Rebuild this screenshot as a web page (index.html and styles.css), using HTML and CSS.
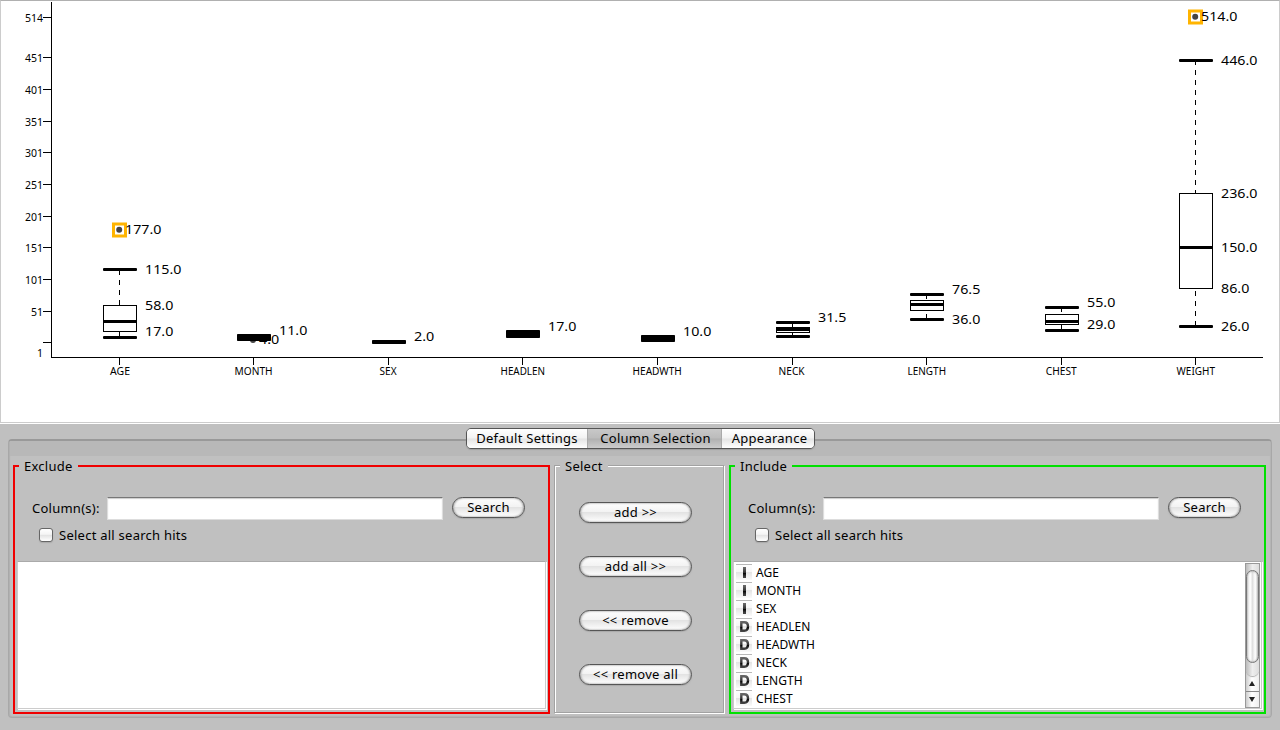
FILE: index.html
```html
<!DOCTYPE html>
<html lang="en">
<head>
<meta charset="utf-8">
<title>Box Plot</title>
<link rel="stylesheet" href="styles.css">
</head>
<body>
<main class="window">
  <section class="chart">
    <svg class="plot" viewBox="0 0 1280 424" width="1280" height="424">
      <defs>
        <g id="cap"><rect x="-16" y="-1.5" width="34" height="3" rx="1"/></g>
        <g id="outlier"><rect class="mark" x="-5.5" y="-5" width="12" height="12"/><circle class="dot" cx=".2" cy=".8" r="3"/></g>
      </defs>
      <path class="line" d="M51.5 2V358M52 357.5H1263M43 17.5h8M43 57.5h8M43 89.5h8M43 121.5h8M43 152.5h8M43 184.5h8M43 216.5h8M43 247.5h8M43 279.5h8M43 311.5h8M43 342.5h8M119.5 358v7M253.5 358v7M388.5 358v7M522.5 358v7M657.5 358v7M792.5 358v7M926.5 358v7M1061.5 358v7M1195.5 358v7"/>
      <g class="scale">
        <text x="25" y="21.5" textLength="18">514</text>
        <text x="25" y="61.8" textLength="18">451</text>
        <text x="25" y="93.8" textLength="18">401</text>
        <text x="25" y="125.8" textLength="18">351</text>
        <text x="25" y="156.8" textLength="18">301</text>
        <text x="25" y="188.8" textLength="18">251</text>
        <text x="25" y="220.8" textLength="18">201</text>
        <text x="25" y="251.8" textLength="18">151</text>
        <text x="25" y="283.8" textLength="18">101</text>
        <text x="31" y="315.8" textLength="12">51</text>
        <text x="37" y="357">1</text>
      </g>
      <g class="names">
        <text x="110" y="375" textLength="20" lengthAdjust="spacingAndGlyphs">AGE</text>
        <text x="234.6" y="375" textLength="38" lengthAdjust="spacingAndGlyphs">MONTH</text>
        <text x="379.6" y="375" textLength="17" lengthAdjust="spacingAndGlyphs">SEX</text>
        <text x="500.6" y="375" textLength="44.4" lengthAdjust="spacingAndGlyphs">HEADLEN</text>
        <text x="632.6" y="375" textLength="49.2" lengthAdjust="spacingAndGlyphs">HEADWTH</text>
        <text x="778.6" y="375" textLength="26" lengthAdjust="spacingAndGlyphs">NECK</text>
        <text x="907.6" y="375" textLength="38.4" lengthAdjust="spacingAndGlyphs">LENGTH</text>
        <text x="1045.8" y="375" textLength="31" lengthAdjust="spacingAndGlyphs">CHEST</text>
        <text x="1176.6" y="375" textLength="38.4" lengthAdjust="spacingAndGlyphs">WEIGHT</text>
      </g>
      <g class="values">
        <text x="259" y="344" textLength="20.3" lengthAdjust="spacingAndGlyphs">4.0</text>
        <circle class="dot" cx="253" cy="340" r="3"/>
      </g>
      <path class="whisker" d="M119.5 270V305M119.5 337V332M792.5 323V328M792.5 336V333M926.5 294V300M926.5 319V311M1061.5 307V314M1061.5 330V325M1195.5 60V193M1195.5 326V289"/>
      <path class="box" d="M103.5 305.5h33v26h-33zM776.5 327.5h33v5h-33zM910.5 300.5h33v10h-33zM1045.5 314.5h33v10h-33zM1179.5 193.5h33v95h-33z"/>
      <use href="#cap" x="119" y="269.5"/><use href="#cap" x="119" y="321.5"/><use href="#cap" x="119" y="337.5"/>
      <rect x="237" y="334" width="34" height="7" rx=".8"/>
      <rect x="372" y="340" width="34" height="4" rx=".8"/>
      <rect x="506" y="330" width="34" height="8" rx=".8"/>
      <rect x="641" y="335" width="34" height="7" rx=".8"/>
      <use href="#cap" x="792" y="322.5"/><rect x="776" y="327" width="34" height="4"/><use href="#cap" x="792" y="336.5"/>
      <use href="#cap" x="926" y="294.5"/><use href="#cap" x="926" y="304.5"/><use href="#cap" x="926" y="319.5"/>
      <use href="#cap" x="1061" y="307.5"/><use href="#cap" x="1061" y="321.5"/><use href="#cap" x="1061" y="330.5"/>
      <use href="#cap" x="1195" y="60.5"/><use href="#cap" x="1195" y="247.5"/><use href="#cap" x="1195" y="326.5"/>
      <use href="#outlier" x="119" y="229"/>
      <use href="#outlier" x="1195" y="16"/>
      <g class="values">
        <text x="125" y="234" textLength="36.4" lengthAdjust="spacingAndGlyphs">177.0</text>
        <text x="145" y="274" textLength="36.4" lengthAdjust="spacingAndGlyphs">115.0</text>
        <text x="145" y="310" textLength="28.3" lengthAdjust="spacingAndGlyphs">58.0</text>
        <text x="145" y="336" textLength="28.3" lengthAdjust="spacingAndGlyphs">17.0</text>
        <text x="279" y="335" textLength="28.3" lengthAdjust="spacingAndGlyphs">11.0</text>
        <text x="414" y="341" textLength="20.3" lengthAdjust="spacingAndGlyphs">2.0</text>
        <text x="548" y="331" textLength="28.3" lengthAdjust="spacingAndGlyphs">17.0</text>
        <text x="683" y="336" textLength="28.3" lengthAdjust="spacingAndGlyphs">10.0</text>
        <text x="818" y="322" textLength="28.3" lengthAdjust="spacingAndGlyphs">31.5</text>
        <text x="952" y="294" textLength="28.3" lengthAdjust="spacingAndGlyphs">76.5</text>
        <text x="952" y="324" textLength="28.3" lengthAdjust="spacingAndGlyphs">36.0</text>
        <text x="1087" y="307" textLength="28.3" lengthAdjust="spacingAndGlyphs">55.0</text>
        <text x="1087" y="329" textLength="28.3" lengthAdjust="spacingAndGlyphs">29.0</text>
        <text x="1201" y="21" textLength="36.4" lengthAdjust="spacingAndGlyphs">514.0</text>
        <text x="1221" y="65" textLength="36.4" lengthAdjust="spacingAndGlyphs">446.0</text>
        <text x="1221" y="198" textLength="36.4" lengthAdjust="spacingAndGlyphs">236.0</text>
        <text x="1221" y="252" textLength="36.4" lengthAdjust="spacingAndGlyphs">150.0</text>
        <text x="1221" y="293" textLength="28.3" lengthAdjust="spacingAndGlyphs">86.0</text>
        <text x="1221" y="331" textLength="28.3" lengthAdjust="spacingAndGlyphs">26.0</text>
      </g>
    </svg>
  </section>

  <section class="settings">
    <nav class="tabs">
      <button class="tab tab-default">Default Settings</button>
      <button class="tab tab-columns selected">Column Selection</button>
      <button class="tab tab-look">Appearance</button>
    </nav>
    <div class="pane">
      <div class="strip"></div>
      <div class="groups">
        <section class="group exclude">
          <h2 class="title">Exclude</h2>
          <div class="search">
            <label class="field-label">Column(s):</label>
            <div class="field"></div>
            <button class="push find">Search</button>
          </div>
          <label class="check"><span class="tick-box"></span>Select all search hits</label>
          <div class="list"></div>
        </section>

        <section class="group middle">
          <h2 class="title">Select</h2>
          <div class="actions">
            <button class="push">add &gt;&gt;</button>
            <button class="push">add all &gt;&gt;</button>
            <button class="push">&lt;&lt; remove</button>
            <button class="push">&lt;&lt; remove all</button>
          </div>
        </section>

        <section class="group include">
          <h2 class="title">Include</h2>
          <div class="search">
            <label class="field-label">Column(s):</label>
            <div class="field"></div>
            <button class="push find">Search</button>
          </div>
          <label class="check"><span class="tick-box"></span>Select all search hits</label>
          <div class="list">
            <svg class="defs" width="0" height="0">
              <defs>
                <linearGradient id="ink" x1="0" y1="4" x2="0" y2="13" gradientUnits="userSpaceOnUse"><stop offset="0" stop-color="#666"/><stop offset=".5" stop-color="#333"/><stop offset=".55" stop-color="#000"/><stop offset="1" stop-color="#444"/></linearGradient>
                <linearGradient id="paper" x1="0" y1="0" x2="0" y2="1"><stop offset="0" stop-color="#fff"/><stop offset=".48" stop-color="#f7f7f7"/><stop offset=".52" stop-color="#e4e4e4"/><stop offset="1" stop-color="#fafafa"/></linearGradient>
                <symbol id="type-int" viewBox="0 0 16 16"><rect width="16" height="16" fill="url(#paper)"/><rect width="16" height="1" fill="#b8b8b8"/><rect x="7" y="3" width="3" height="11" fill="url(#ink)"/></symbol>
                <symbol id="type-double" viewBox="0 0 16 16"><rect width="16" height="16" fill="url(#paper)"/><rect width="16" height="1" fill="#b8b8b8"/><path d="M5.3 4.2H8.3Q12 4.2 12 8.4T8.3 12.7H5.3Z" fill="none" stroke="url(#ink)" stroke-width="2.4"/></symbol>
              </defs>
            </svg>
            <ul class="items">
              <li class="item"><svg class="type"><use href="#type-int"/></svg>AGE</li>
              <li class="item"><svg class="type"><use href="#type-int"/></svg>MONTH</li>
              <li class="item"><svg class="type"><use href="#type-int"/></svg>SEX</li>
              <li class="item"><svg class="type"><use href="#type-double"/></svg>HEADLEN</li>
              <li class="item"><svg class="type"><use href="#type-double"/></svg>HEADWTH</li>
              <li class="item"><svg class="type"><use href="#type-double"/></svg>NECK</li>
              <li class="item"><svg class="type"><use href="#type-double"/></svg>LENGTH</li>
              <li class="item"><svg class="type"><use href="#type-double"/></svg>CHEST</li>
            </ul>
            <div class="scrollbar">
              <div class="track"><div class="thumb"></div></div>
              <div class="arrow"><svg width="7" height="5"><path d="M3 0L6 5H0Z"/></svg></div>
              <div class="arrow down"><svg width="7" height="5"><path d="M0 0H6L3 5Z"/></svg></div>
            </div>
          </div>
        </section>
      </div>
    </div>
  </section>
</main>
</body>
</html>
```
FILE: styles.css
```css
* { box-sizing: border-box; }
body {
  margin: 0;
  font: 13px/16px "Noto Sans", "Open Sans", sans-serif;
  letter-spacing: .25px;
  color: #000;
}
.window {
  width: 1280px;
  height: 730px;
  display: flex;
  flex-direction: column;
  background: #c0c0c0;
  overflow: hidden;
}

/* chart */
.chart {
  height: 423px;
  border: 1px solid #ccc;
  border-top-color: #b0b0b0;
  background: #fff;
  box-shadow: 0 1px 0 #fff;
  flex: none;
}
.plot { display: block; margin: -1px; }
.line, .box { fill: none; stroke: #000; stroke-width: 1; shape-rendering: crispEdges; }
.box { fill: #fff; }
.whisker { fill: none; stroke: #000; stroke-width: 1; stroke-dasharray: 5 5; }
.scale { font-size: 10.5px; letter-spacing: 0; }
.names { font-size: 11px; letter-spacing: 0; }
.values { font-size: 13px; letter-spacing: 0; }
.mark { fill: #fff; stroke: #ffb400; stroke-width: 3; }
.dot { fill: #444; }

/* tabs */
.settings {
  flex: 1;
  display: flex;
  flex-direction: column;
  padding: 5px 8px 12px;
}
.tabs {
  position: relative;
  z-index: 1;
  align-self: center;
  display: flex;
  width: 349px;
  height: 21px;
  margin-left: 1px;
  border: 1px solid #555;
  border-radius: 5px;
  box-shadow: 0 1px 1px #8888;
  overflow: hidden;
  flex: none;
}
button {
  margin: 0;
  padding: 0;
  border: 0;
  font: inherit;
  letter-spacing: inherit;
  color: inherit;
  white-space: nowrap;
}
.tab {
  padding-bottom: 2px;
  background: linear-gradient(#fff, #f2f2f2 48%, #e4e4e4 52%, #fff);
}
.tab.selected {
  background: linear-gradient(#c8c8c8, #bcbcbc 48%, #b0b0b0 52%, #ccc);
  border: solid #aaa;
  border-width: 0 1px;
}
.tab-default { width: 120px; }
.tab-columns { width: 135px; padding-left: 2px; }
.tab-look { flex: 1; padding-left: 3px; }
.pane {
  margin-top: -10px;
  height: 279px;
  border: 1px solid #a8a8a8;
  border-top: 2px solid #999;
  border-radius: 4px;
  box-shadow: inset 1px 0 1px #b0b0b0, inset -1px 0 1px #b4b4b4, inset 0 -1px 1px #b4b4b4;
}
.strip { height: 15px; margin: 0 1px; background: #b8b8b8; }
.groups { display: flex; padding: 9px 4px 0; }

/* titled groups */
.group { height: 249px; flex: none; }
.title {
  width: max-content;
  margin: -8px 0 0 4px;
  padding: 0 5px;
  background: #c0c0c0;
  font: inherit;
}
.exclude, .include { width: 537px; border: 2px solid #f00000; }
.exclude .title, .include .title { margin-top: -9px; }
.include { border-color: #00e000; margin-left: 5px; }
.middle {
  width: 170px;
  height: 248px;
  margin-left: 4px;
  border: 1px solid #a2a2a2;
  box-shadow: 1px 1px 0 #fff, inset 1px 1px 0 #fff;
}
.middle .title { margin-left: 5px; }
.search {
  display: flex;
  height: 23px;
  margin: 23px 0 0 17px;
}
.field-label { width: 75px; padding-top: 3px; }
.field {
  width: 336px;
  background: #fff;
  border: 1px solid #ddd;
  border-top: 1px solid #777;
  box-shadow: inset 0 1px 1px #ccc;
}
.push {
  height: 21px;
  padding-bottom: 2px;
  border: 1px solid #555;
  border-radius: 11px;
  background: linear-gradient(#fdfdfd, #f3f3f3 45%, #e3e3e3 50%, #fff);
  box-shadow: 0 1px 1px #9999, inset 1px 0 2px #aaa, inset -1px 0 2px #aaa;
}
.find { width: 73px; margin-left: 9px; }
.check {
  display: flex;
  margin: 7px 0 0 24px;
}
.tick-box {
  width: 14px;
  height: 14px;
  margin: 1px 6px 0 0;
  border: 1px solid #666;
  border-radius: 3px;
  background: linear-gradient(#fff, #f4f4f4 45%, #e2e2e2 50%, #fff);
  box-shadow: 0 1px 1px #9999;
}
.list {
  display: flex;
  justify-content: space-between;
  width: 529px;
  height: 148px;
  margin: 18px 0 0 2px;
  border: 1px solid #ccc;
  border-top-color: #aaa;
  background: #fff;
  box-shadow: 1px 1px 0 #fff;
}
.actions {
  display: flex;
  flex-direction: column;
  gap: 33px;
  margin: 28px 0 0 24px;
  width: 113px;
}

/* column list */
.defs { position: absolute; }
.items {
  margin: 0;
  padding: 1px 0 0 2px;
  list-style: none;
  font-size: 12px;
  letter-spacing: .05px;
}
.item {
  display: flex;
  align-items: center;
  height: 18px;
  padding-top: 2px;
  gap: 4px;
}
.type { width: 16px; height: 16px; margin-top: -2px; }
.scrollbar {
  display: flex;
  flex-direction: column;
  width: 15px;
  height: 145px;
  margin: 1px 1px 0 0;
  border: 1px solid #999;
  background: linear-gradient(90deg, #ccc, #fff 45%, #eee);
}
.track {
  height: 112px;
  padding-top: 6px;
  border-radius: 0 0 7px 7px;
  background: linear-gradient(90deg, #bbb, #eee 50%, #ddd);
  box-shadow: 0 1px 1px #aaa;
}
.thumb {
  height: 93px;
  border: 1px solid #777;
  border-radius: 7px;
  background: linear-gradient(90deg, #ddd, #fff 30%, #e0e0e0 50%, #fff 75%, #ccc);
  box-shadow: inset 0 0 2px #888;
}
.arrow {
  display: flex;
  align-items: center;
  justify-content: center;
  height: 15px;
  fill: #222;
}
.arrow.down { height: 16px; border-top: 1px solid #888; }
```
